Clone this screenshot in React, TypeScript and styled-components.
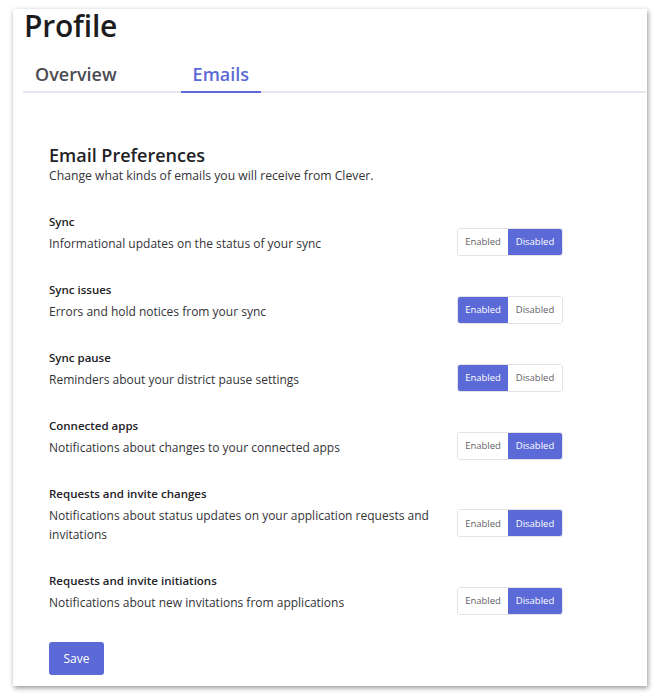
import React from "react";
import styled, { createGlobalStyle } from "styled-components";

const Global = createGlobalStyle`
  html, body { margin: 0; padding: 0; background: #ffffff; }
  body { font-family: "Open Sans", "Liberation Sans", sans-serif; -webkit-font-smoothing: antialiased; }
  * { box-sizing: border-box; }
`;

const ACCENT = "#5b6ad6";

const Page = styled.div`
  width: 662px;
  height: 700px;
  padding: 9px 15px 14px 13px;
`;

const Card = styled.div`
  height: 100%;
  background: #fff;
  box-shadow: 1px 2px 5px rgba(0, 0, 0, 0.42);
  display: flex;
  flex-direction: column;
`;

const Header = styled.div`
  padding: 0 1px 0 10px;
`;

const Title = styled.h1`
  margin: 0;
  padding: 0 0 0 1px;
  font-size: 30px;
  line-height: 34px;
  font-weight: 600;
  color: #1c1c1f;
  letter-spacing: -0.2px;
`;

const Tabs = styled.div`
  display: flex;
  gap: 52px;
  margin-top: 19px;
  border-bottom: 2px solid #e6e6ee;
`;

const Tab = styled.div<{ $active?: boolean }>`
  padding: 0 12px 5px;
  font-size: 18px;
  line-height: 24px;
  font-weight: 600;
  color: ${(p) => (p.$active ? ACCENT : "#4b4b50")};
  margin-bottom: -2px;
  border-bottom: 2px solid ${(p) => (p.$active ? ACCENT : "transparent")};
`;

const Body = styled.div`
  padding: 51px 0 0 36px;
  display: flex;
  flex-direction: column;
`;

const Heading = styled.h2`
  margin: 0;
  font-size: 18px;
  line-height: 23px;
  font-weight: 600;
  color: #222226;
`;

const Sub = styled.p`
  margin: 0;
  font-size: 12.2px;
  line-height: 18px;
  color: #333338;
`;

const Rows = styled.div`
  display: flex;
  flex-direction: column;
  gap: 29px;
  margin-top: 29px;
  width: 514px;
`;

const Row = styled.div`
  display: flex;
  flex-direction: column;
`;

const RowTitle = styled.div`
  font-size: 11.5px;
  line-height: 16px;
  font-weight: 600;
  color: #222226;
`;

const DescRow = styled.div`
  display: flex;
  align-items: center;
  justify-content: space-between;
  margin-top: 4px;
`;

const Desc = styled.div`
  width: 400px;
  font-size: 12px;
  line-height: 19px;
  color: #333338;
`;

const Toggle = styled.div`
  display: flex;
  height: 28px;
  margin: -5px 0 -5px 0;
  transform: translateY(-2px);
  border: 1px solid #e2e2e8;
  border-radius: 3px;
  overflow: hidden;
`;

const ToggleBtn = styled.div<{ $on?: boolean; $w: number }>`
  width: ${(p) => p.$w}px;
  display: flex;
  align-items: center;
  justify-content: center;
  font-size: 9.5px;
  color: ${(p) => (p.$on ? "#fff" : "#5f5f66")};
  background: ${(p) => (p.$on ? ACCENT : "#fff")};
`;

const SaveButton = styled.button`
  align-self: flex-start;
  margin-top: 30px;
  width: 55px;
  height: 33px;
  border: none;
  border-radius: 3px;
  background: ${ACCENT};
  color: #fff;
  font-family: inherit;
  font-size: 12px;
  font-weight: 500;
  padding: 0;
`;

const rows: { title: string; desc: string; enabled: boolean }[] = [
  { title: "Sync", desc: "Informational updates on the status of your sync", enabled: false },
  { title: "Sync issues", desc: "Errors and hold notices from your sync", enabled: true },
  { title: "Sync pause", desc: "Reminders about your district pause settings", enabled: true },
  { title: "Connected apps", desc: "Notifications about changes to your connected apps", enabled: false },
  {
    title: "Requests and invite changes",
    desc: "Notifications about status updates on your application requests and invitations",
    enabled: false,
  },
  {
    title: "Requests and invite initiations",
    desc: "Notifications about new invitations from applications",
    enabled: false,
  },
];

export default function App() {
  return (
    <>
      <Global />
      <Page>
        <Card>
          <Header>
            <Title>Profile</Title>
            <Tabs>
              <Tab>Overview</Tab>
              <Tab $active>Emails</Tab>
            </Tabs>
          </Header>
          <Body>
            <Heading>Email Preferences</Heading>
            <Sub>Change what kinds of emails you will receive from Clever.</Sub>
            <Rows>
              {rows.map((r) => (
                <Row key={r.title}>
                  <RowTitle>{r.title}</RowTitle>
                  <DescRow>
                    <Desc>{r.desc}</Desc>
                    <Toggle>
                      <ToggleBtn $w={50} $on={r.enabled}>Enabled</ToggleBtn>
                      <ToggleBtn $w={54} $on={!r.enabled}>Disabled</ToggleBtn>
                    </Toggle>
                  </DescRow>
                </Row>
              ))}
            </Rows>
            <SaveButton>Save</SaveButton>
          </Body>
        </Card>
      </Page>
    </>
  );
}
